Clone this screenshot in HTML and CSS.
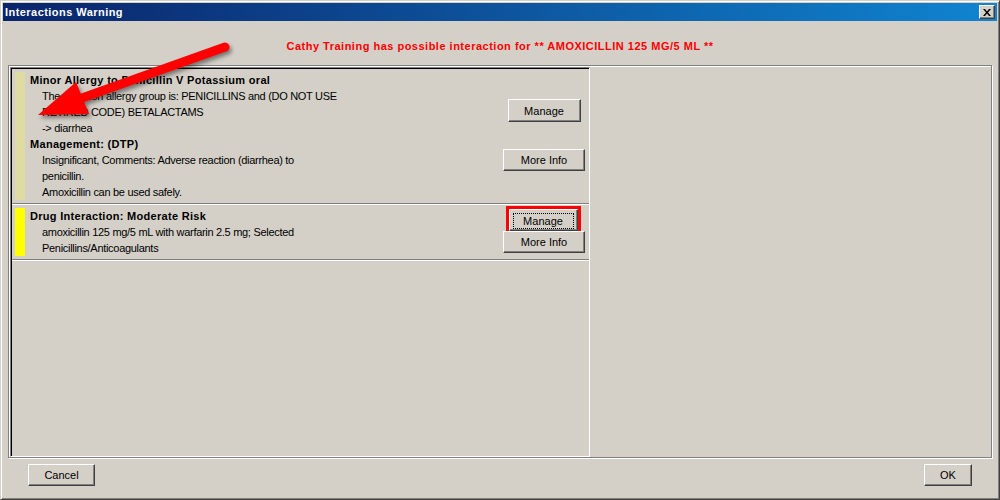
FILE: index.html
```html
<!DOCTYPE html>
<html lang="en">
<head>
    <meta charset="UTF-8">
    <title>Interactions Warning</title>
    <link rel="stylesheet" href="styles.css">
</head>
<body>
    <div class="window">
        <div class="titlebar">
            <span class="title">Interactions Warning</span>
            <button class="close-btn">
                <svg width="8" height="7" viewBox="0 0 8 7">
                    <path d="M0 0h2l2 2.5L6 0h2L5 3.5 8 7H6L4 4.5 2 7H0l3-3.5z" fill="#000"/>
                </svg>
            </button>
        </div>

        <div class="content">
            <div class="banner">Cathy Training has possible interaction for ** AMOXICILLIN 125 MG/5 ML **</div>

            <div class="frame">
                <div class="list">
                    <!-- allergy -->
                    <div class="item">
                        <div class="bar bar-minor"></div>
                        <div class="text">
                            <div class="head">Minor Allergy to Penicillin V Potassium oral</div>
                            <div class="line">The common allergy group is: PENICILLINS and (DO NOT USE</div>
                            <div class="line">RETIRED CODE) BETALACTAMS</div>
                            <div class="line">-&gt; diarrhea</div>
                            <div class="head">Management: (DTP)</div>
                            <div class="line">Insignificant, Comments: Adverse reaction (diarrhea) to</div>
                            <div class="line">penicillin.</div>
                            <div class="line">Amoxicillin can be used safely.</div>
                        </div>
                        <div class="actions actions-spread">
                            <button class="btn btn-manage">Manage</button>
                            <button class="btn btn-info">More Info</button>
                        </div>
                    </div>

                    <!-- drug interaction -->
                    <div class="item">
                        <div class="bar bar-moderate"></div>
                        <div class="text">
                            <div class="head">Drug Interaction: Moderate Risk</div>
                            <div class="line">amoxicillin 125 mg/5 mL with warfarin 2.5 mg; Selected</div>
                            <div class="line">Penicillins/Anticoagulants</div>
                        </div>
                        <div class="actions actions-tight">
                            <button class="btn btn-manage btn-focus highlight"><span>Manage</span></button>
                            <button class="btn btn-info">More Info</button>
                        </div>
                    </div>
                </div>
                <div class="side"></div>
            </div>

            <div class="footer">
                <button class="btn btn-cancel">Cancel</button>
                <button class="btn btn-ok">OK</button>
            </div>
        </div>
    </div>

    <!-- annotation arrow -->
    <svg class="arrow" width="1000" height="500" viewBox="0 0 1000 500">
        <g class="arrow-shape">
            <line x1="225" y1="47" x2="82" y2="98" stroke="#ff0000" stroke-width="9" stroke-linecap="round"/>
            <polygon points="38,115 76,82 89,114" fill="#ff0000"/>
        </g>
    </svg>
</body>
</html>
```

FILE: styles.css
```css
body {
    margin: 0;
    font-family: "Liberation Sans", Arial, sans-serif;
    font-size: 11px;
    color: #000;
    position: relative;
}
.window {
    width: 1000px;
    height: 500px;
    box-sizing: border-box;
    background: #d4d0c8;
    border: 1px solid;
    border-color: #d4d0c8 #404040 #404040 #d4d0c8;
    box-shadow: inset 1px 1px #fff, inset -1px -1px #808080;
    padding: 2px;
}
.titlebar {
    height: 18px;
    display: flex;
    align-items: center;
    padding: 0 2px;
    background: linear-gradient(to right, #0a246a, #1084d0);
}
.title {
    color: #fff;
    font-weight: bold;
    font-size: 11px;
    letter-spacing: 0.45px;
}
.close-btn {
    margin-left: auto;
    width: 16px;
    height: 14px;
    padding: 0;
    display: flex;
    align-items: center;
    justify-content: center;
    background: #d4d0c8;
    border: 1px solid;
    border-color: #fff #404040 #404040 #fff;
    box-shadow: inset -1px -1px #808080;
}
.content {
    padding: 0 5px;
}
.banner {
    padding: 18px 0 12px;
    line-height: 14px;
    text-align: center;
    color: #ff0000;
    font-weight: bold;
    letter-spacing: 0.5px;
}
.frame {
    height: 393px;
    box-sizing: border-box;
    display: flex;
    padding: 1px 0 0 1px;
    border: 1px solid #808080;
    box-shadow: 1px 1px 0 #fff, inset 1px 1px 0 #fff;
}
.list {
    width: 580px;
    box-sizing: border-box;
    border: 1px solid;
    border-color: #808080 #fff #fff #808080;
    box-shadow: inset 1px 1px #000;
    padding: 1px 0 0 1px;
}
.side {
    flex: 1;
}
.item {
    display: flex;
    padding: 3px 0 3px 3px;
    border-bottom: 1px solid #808080;
    box-shadow: 0 1px 0 #fff;
    margin-bottom: 1px;
}
.bar {
    width: 10px;
    flex-shrink: 0;
}
.bar-minor {
    background: #dedca2;
}
.bar-moderate {
    background: #ffff00;
}
.text {
    margin-left: 5px;
    line-height: 16px;
    white-space: nowrap;
}
.head {
    font-weight: bold;
    letter-spacing: 0.3px;
}
.line {
    padding-left: 12px;
    letter-spacing: -0.3px;
}
.actions {
    margin-left: auto;
    margin-right: 1px;
    width: 88px;
    display: flex;
    flex-direction: column;
    align-items: center;
}
.actions-spread {
    padding-top: 27px;
    gap: 27px;
}
.actions-tight {
    padding-top: 1px;
}
.btn {
    box-sizing: border-box;
    padding: 0;
    background: #d4d0c8;
    font-family: "Liberation Sans", Arial, sans-serif;
    font-size: 11px;
    color: #000;
    border: 1px solid;
    border-color: #fff #404040 #404040 #fff;
    box-shadow: inset -1px -1px #808080;
}
.btn-manage {
    width: 73px;
    height: 23px;
}
.btn-info {
    width: 82px;
    height: 22px;
}
.btn-focus {
    width: 69px;
    height: 22px;
    padding: 3px;
    margin-left: -2px;
}
.btn-focus span {
    display: block;
    height: 14px;
    line-height: 14px;
    border: 1px dotted #000;
}
.highlight {
    outline: 3px solid #ff0000;
}
.footer {
    display: flex;
    justify-content: space-between;
    padding: 6px 20px 0;
}
.btn-cancel {
    width: 67px;
    height: 22px;
}
.btn-ok {
    width: 48px;
    height: 22px;
}
.arrow {
    position: absolute;
    left: 0;
    top: 0;
    pointer-events: none;
}
.arrow-shape {
    filter: drop-shadow(2px 3px 2px rgba(0, 0, 0, 0.45));
}
```
